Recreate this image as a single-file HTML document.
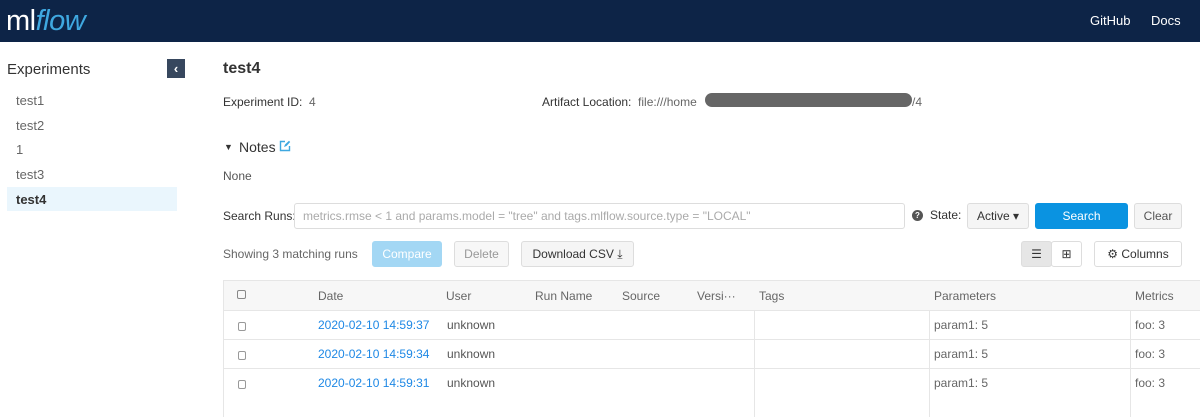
<!DOCTYPE html>
<html><head><style>
*{box-sizing:border-box;margin:0;padding:0}
body{width:1200px;height:417px;overflow:hidden;font-family:"Liberation Sans",sans-serif;background:#fff;color:#333;position:relative;font-size:13px}
.a{position:absolute;white-space:nowrap}
.hdr{position:absolute;left:0;top:0;width:1200px;height:42px;background:#0d2447}
.btn{position:absolute;border:1px solid #ddd;border-radius:3px;background:#f5f5f5;text-align:center;font-size:12px;color:#333}
.lnk{color:#1e88e5}
.row{position:absolute;left:223px;width:977px;border-top:1px solid #e6e6e6;height:29px;font-size:12px}
.vl{position:absolute;top:310px;height:107px;width:1px;background:#e6e6e6}
.cb{position:absolute;left:15px;width:8px;height:9px;border:1px solid #999;border-radius:2px}
</style></head><body>
<div class="hdr"></div>
<div class="a" style="left:6px;top:5px;font-size:29px;color:#fff;letter-spacing:-0.5px">ml<span style="color:#3fa8e0;font-style:italic">flow</span></div>
<div class="a" style="left:1090px;top:13px;color:#fff;font-size:13px">GitHub</div>
<div class="a" style="left:1151px;top:13px;color:#fff;font-size:13px">Docs</div>

<div class="a" style="left:7px;top:61px;font-size:15px;color:#333">Experiments</div>
<div class="a" style="left:167px;top:59px;width:18px;height:19px;background:#37475e;color:#fff;font-size:13px;text-align:center;line-height:19px;font-weight:bold">‹</div>
<div class="a" style="left:16px;top:93px;color:#666">test1</div>
<div class="a" style="left:16px;top:118px;color:#666">test2</div>
<div class="a" style="left:16px;top:142px;color:#666">1</div>
<div class="a" style="left:16px;top:167px;color:#666">test3</div>
<div class="a" style="left:7px;top:187px;width:170px;height:24px;background:#eaf6fd"></div>
<div class="a" style="left:16px;top:192px;color:#333;font-weight:bold">test4</div>

<div class="a" style="left:223px;top:60px;font-size:16px;font-weight:bold">test4</div>
<div class="a" style="left:223px;top:95px;font-size:12px">Experiment ID:&nbsp; <span style="color:#666">4</span></div>
<div class="a" style="left:542px;top:95px;font-size:12px">Artifact Location:&nbsp; <span style="color:#666">file:///home</span></div>
<div class="a" style="left:705px;top:93px;width:207px;height:14px;border-radius:7px;background:#666"></div>
<div class="a" style="left:912px;top:95px;font-size:12px;color:#666">/4</div>
<div class="a" style="left:224px;top:142px;font-size:9px">▼</div>
<div class="a" style="left:239px;top:139px;font-size:14px">Notes</div>
<svg class="a" style="left:279px;top:140px" width="12" height="12" viewBox="0 0 12 12"><path d="M6 1.5H1.5v9h9V6" fill="none" stroke="#3fa8e0" stroke-width="1.4"/><path d="M5 7l1-2.5L10 0.8l1.2 1.2L7.5 6z" fill="#3fa8e0"/></svg>
<div class="a" style="left:223px;top:169px;font-size:12px;color:#555">None</div>

<div class="a" style="left:223px;top:209px;font-size:12px">Search Runs:</div>
<div class="a" style="left:294px;top:203px;width:611px;height:26px;border:1px solid #ddd;border-radius:3px;padding:5px 8px;font-size:12px;color:#aaa">metrics.rmse &lt; 1 and params.model = "tree" and tags.mlflow.source.type = "LOCAL"</div>
<div class="a" style="left:912px;top:210px;width:11px;height:11px;border-radius:50%;background:#555;color:#fff;font-size:8px;text-align:center;line-height:11px;font-weight:bold">?</div>
<div class="a" style="left:930px;top:208px;font-size:12px">State:</div>
<div class="btn" style="left:967px;top:203px;width:62px;height:26px;line-height:24px">Active ▾</div>
<div class="btn" style="left:1035px;top:203px;width:93px;height:26px;line-height:24px;background:#0a93e1;border-color:#0a93e1;color:#fff">Search</div>
<div class="btn" style="left:1134px;top:203px;width:48px;height:26px;line-height:24px;color:#555">Clear</div>

<div class="a" style="left:223px;top:247px;font-size:12px;color:#666">Showing 3 matching runs</div>
<div class="btn" style="left:372px;top:241px;width:70px;height:26px;line-height:24px;background:#a3d7f4;border-color:#a3d7f4;color:#fff">Compare</div>
<div class="btn" style="left:454px;top:241px;width:55px;height:26px;line-height:24px;color:#999;background:#f7f7f7">Delete</div>
<div class="btn" style="left:521px;top:241px;width:113px;height:26px;line-height:24px">Download CSV ⤓</div>
<div class="btn" style="left:1021px;top:241px;width:31px;height:26px;line-height:24px;background:#e6e6e6">☰</div>
<div class="btn" style="left:1051px;top:241px;width:31px;height:26px;line-height:24px;background:#fff">⊞</div>
<div class="btn" style="left:1094px;top:241px;width:88px;height:26px;line-height:24px;background:#fff">⚙ Columns</div>

<div class="a" style="left:223px;top:280px;width:977px;height:30px;background:#f7f7f7;border-top:1px solid #e6e6e6;border-left:1px solid #e6e6e6"></div>
<div class="a" style="left:237px;top:290px;width:9px;height:9px;border:1px solid #888;border-radius:2px"></div>
<div class="a" style="left:318px;top:289px;font-size:12px;color:#666">Date</div>
<div class="a" style="left:446px;top:289px;font-size:12px;color:#666">User</div>
<div class="a" style="left:535px;top:289px;font-size:12px;color:#666">Run Name</div>
<div class="a" style="left:622px;top:289px;font-size:12px;color:#666">Source</div>
<div class="a" style="left:697px;top:289px;font-size:12px;color:#666">Versi···</div>
<div class="a" style="left:759px;top:289px;font-size:12px;color:#666">Tags</div>
<div class="a" style="left:934px;top:289px;font-size:12px;color:#666">Parameters</div>
<div class="a" style="left:1135px;top:289px;font-size:12px;color:#666">Metrics</div>

<div class="a" style="left:223px;top:310px;width:1px;height:107px;background:#e6e6e6"></div>
<div class="vl" style="left:754px"></div><div class="vl" style="left:929px"></div><div class="vl" style="left:1130px"></div>
<div class="row" style="top:310px"><div class="cb" style="top:11px"></div><span class="a lnk" style="left:95px;top:7px">2020-02-10 14:59:37</span><span class="a" style="left:224px;top:7px;color:#555">unknown</span><span class="a" style="left:711px;top:7px;color:#666">param1: 5</span><span class="a" style="left:912px;top:7px;color:#666">foo: 3</span></div>
<div class="row" style="top:339px"><div class="cb" style="top:11px"></div><span class="a lnk" style="left:95px;top:7px">2020-02-10 14:59:34</span><span class="a" style="left:224px;top:7px;color:#555">unknown</span><span class="a" style="left:711px;top:7px;color:#666">param1: 5</span><span class="a" style="left:912px;top:7px;color:#666">foo: 3</span></div>
<div class="row" style="top:368px"><div class="cb" style="top:11px"></div><span class="a lnk" style="left:95px;top:7px">2020-02-10 14:59:31</span><span class="a" style="left:224px;top:7px;color:#555">unknown</span><span class="a" style="left:711px;top:7px;color:#666">param1: 5</span><span class="a" style="left:912px;top:7px;color:#666">foo: 3</span></div>
</body></html>
